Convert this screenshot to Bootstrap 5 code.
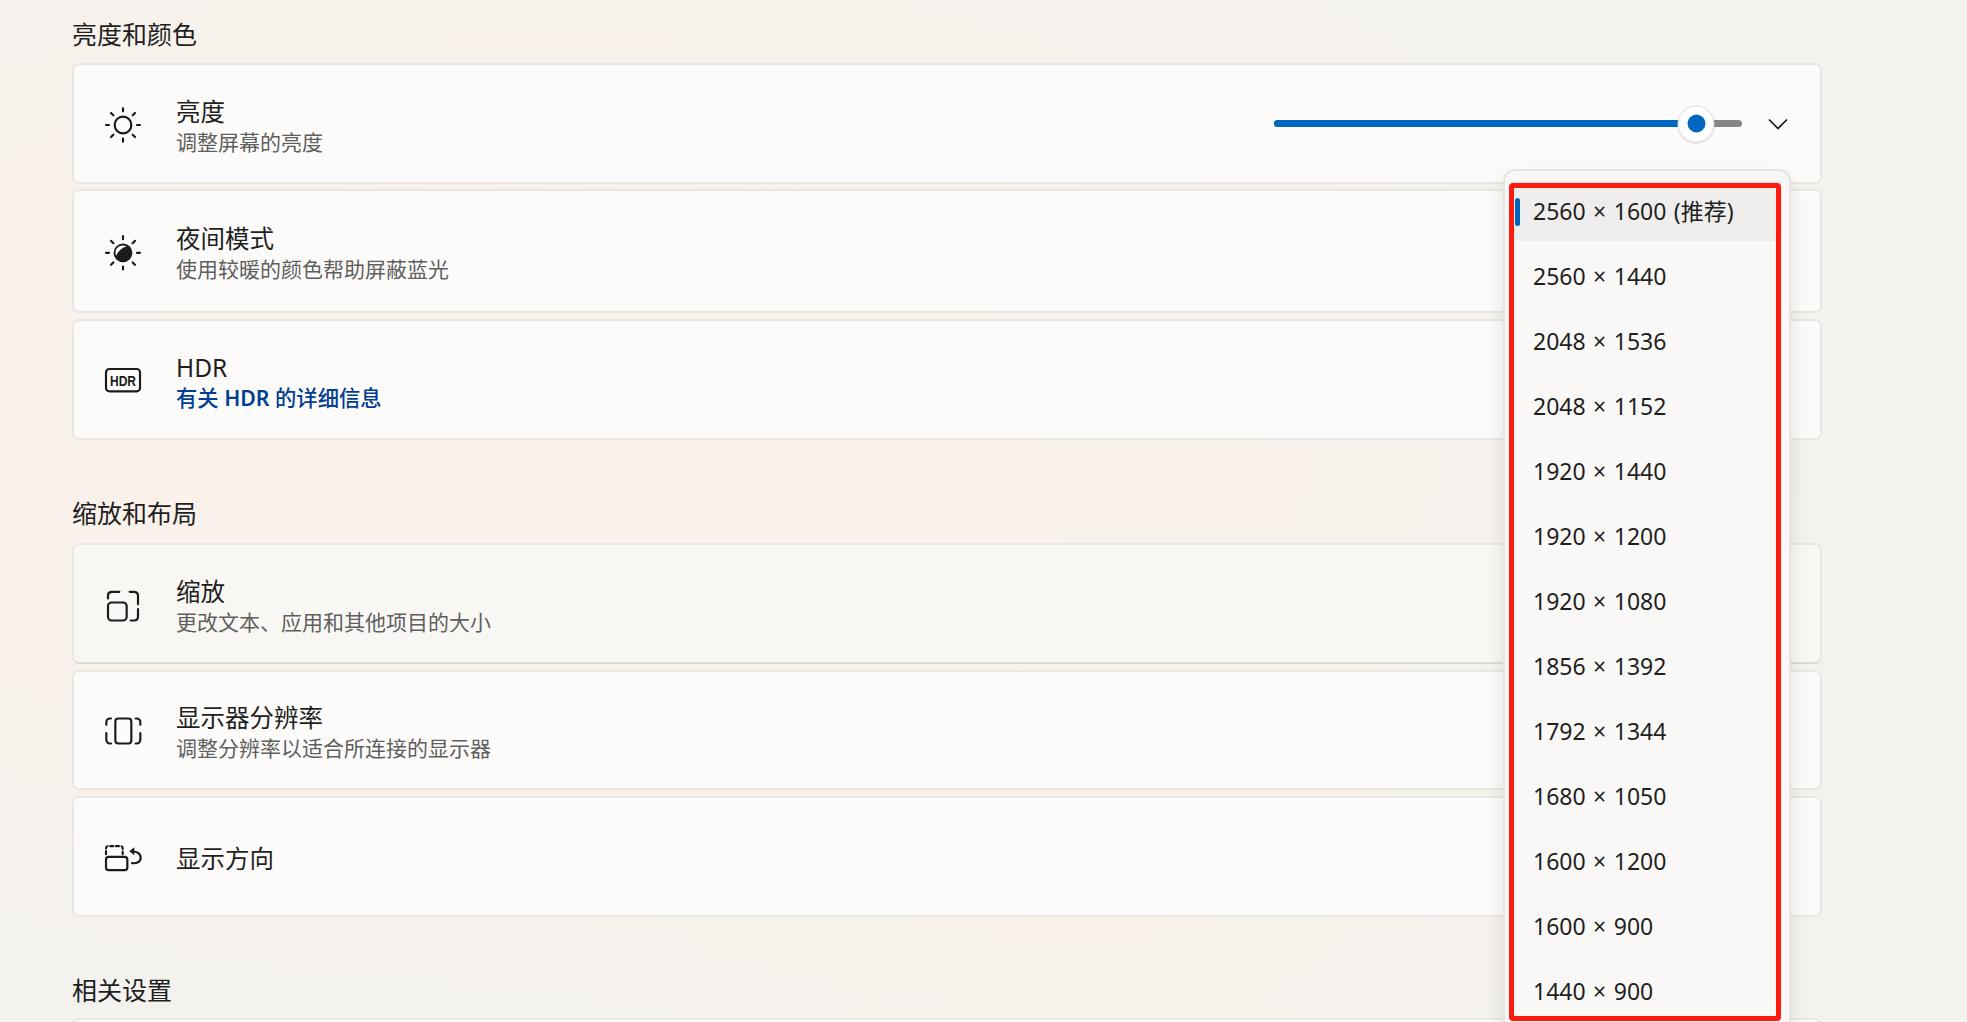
<!DOCTYPE html>
<html lang="zh-CN">
<head>
<meta charset="utf-8">
<title>显示</title>
<link href="https://cdn.jsdelivr.net/npm/bootstrap@5.3.0/dist/css/bootstrap.min.css" rel="stylesheet">
<style>
html,body{height:100%;overflow:hidden}
body{font-family:"Noto Sans","Noto Sans CJK SC",sans-serif;color:#1b1b1b;
  background:
    radial-gradient(ellipse 1250px 640px at 560px 420px,#faf1ea 0%,rgba(250,241,234,.8) 55%,rgba(250,241,234,0) 100%),
    radial-gradient(ellipse 600px 300px at 1100px 900px,#f8f1ea 0%,rgba(248,241,234,0) 100%),
    #f3f2ee}
.canvas{position:relative;width:1967px;height:1022px;padding:0 145px 0 72px}
.group-head{font-size:25px;line-height:34px;font-weight:400;margin:0;color:#1f1f1f}
.head-one{padding-top:17px;margin-bottom:12px}
.head-two{padding-top:51px;margin-bottom:13px}
.head-three{padding-top:51px;margin-bottom:11px}
.setting{height:121px;margin-bottom:5px;background:#fcfbf9;border:2px solid #ebe8e4;border-radius:7px;
  flex-direction:row;align-items:center;padding:0 32px 0 16px}
.setting.tall{height:124px;margin-bottom:6px}
.setting.hovered{background:#f9f7f4;border-bottom-color:#dedbd6;margin-bottom:6px}
.setting.shorter{height:120px;margin-bottom:6px}
.setting.last-one{height:121px}
.setting.stub{height:60px}
.glyph{flex:0 0 70px;width:70px;height:70px;margin-right:16px}
.glyph *{fill:none;stroke:#1b1b1b;stroke-width:6.5;stroke-linecap:round;stroke-linejoin:round}
.glyph .solid{fill:#1b1b1b;stroke:none}
.glyph .hole{fill:#fcfbf9;stroke:none}
.glyph .mark-text{fill:#1b1b1b;stroke:none;font:700 46px "Liberation Sans",sans-serif}
.labels{padding-top:5px}
.labels.solo{padding-top:3px}
.label-main{font-size:24.5px;line-height:31px;color:#1f1f1f}
.label-sub{font-size:21px;line-height:30px;color:#5f5f5f}
.label-link{font-size:21.3px;line-height:30px;color:#003e92;font-weight:500;text-decoration:none}
.label-link b{font-weight:600}
.slider-box{margin-left:auto;display:flex;align-items:center;gap:26px}
.track{position:relative;width:468px;height:7px;border-radius:4px;background:#868686}
.track-fill{height:7px;border-radius:4px;background:#0067c0}
.thumb{position:absolute;top:50%;width:37px;height:37px;border-radius:50%;background:#fff;border:1px solid #e4e3e1;
  box-shadow:0 1px 2px rgba(0,0,0,.14);transform:translate(-50%,-50%);display:flex;align-items:center;justify-content:center}
.thumb-dot{width:18px;height:18px;border-radius:50%;background:#0067c0}
.chev{width:20px;height:12px;fill:none;stroke:#1b1b1b;stroke-width:1.7}
.popup{position:absolute;left:1503px;top:169px;width:288px;height:900px;padding:10px 7px 0 7px;background:#f9f8f6;
  border:2px solid #e7e5e2;border-radius:12px;box-shadow:0 8px 18px rgba(0,0,0,.10)}
.res-item{position:relative;height:58px;margin-bottom:7px;padding:0 0 0 21px;display:flex;align-items:center;
  background:transparent;border:0;border-radius:5px;font-size:23px;word-spacing:1.5px;color:#1f1f1f;white-space:nowrap}
.res-item.current{background:#efeeec;height:60px;margin-bottom:6.5px}
.res-item.current::before{content:"";position:absolute;left:3px;top:17px;width:5px;height:28px;border-radius:3px;background:#0067c0}
.red-frame{position:absolute;left:1509px;top:183px;width:272px;height:838px;border:5px solid #ff1a0e;border-radius:4px;pointer-events:none}
</style>
</head>
<body>
<div class="canvas overflow-hidden">
  <h2 class="group-head head-one">亮度和颜色</h2>

  <div class="card setting">
    <svg class="glyph" viewBox="0 -6 210 210">
      <circle cx="99" cy="102" r="25"/>
      <path d="M99 52v9M99 143v9M48 102h9M141 102h9M63 66l7 7M128 131l7 7M135 66l-7 7M70 131l-7 7"/>
    </svg>
    <div class="labels">
      <div class="label-main">亮度</div>
      <div class="label-sub">调整屏幕的亮度</div>
    </div>
    <div class="slider-box">
      <div class="track">
        <div class="track-fill" style="width:90.2%"></div>
        <div class="thumb" style="left:90.2%"><div class="thumb-dot"></div></div>
      </div>
      <svg class="chev" viewBox="0 0 20 12"><path d="M1 1.5l9 9 9-9"/></svg>
    </div>
  </div>

  <div class="card setting tall">
    <svg class="glyph" viewBox="0 -13.5 210 210">
      <circle class="solid" cx="99" cy="97" r="28"/>
      <path class="hole" d="M78 106C72 84 88 70 110 77 94 82 84 92 78 106z"/>
      <path d="M99 47v9M99 138v9M48 97h9M141 97h9M63 61l7 7M128 126l7 7M135 61l-7 7M70 126l-7 7"/>
    </svg>
    <div class="labels">
      <div class="label-main">夜间模式</div>
      <div class="label-sub">使用较暖的颜色帮助屏蔽蓝光</div>
    </div>
  </div>

  <div class="card setting">
    <svg class="glyph" viewBox="0 -3 210 210">
      <rect x="48" y="69" width="102" height="67" rx="10"/>
      <text class="mark-text" x="60" y="119" textLength="78" lengthAdjust="spacingAndGlyphs">HDR</text>
    </svg>
    <div class="labels">
      <div class="label-main">HDR</div>
      <a class="label-link" href="#">有关 <b>HDR</b> 的详细信息</a>
    </div>
  </div>

  <h2 class="group-head head-two">缩放和布局</h2>

  <div class="card setting hovered">
    <svg class="glyph" viewBox="0 -10.5 210 210">
      <rect x="54" y="90" width="56" height="54" rx="11"/>
      <path d="M54 78v-8c0-7 5-12 12-12h22M119 58h12c8 0 13 5 13 12v25M144 110v22c0 7-5 12-12 12h-10"/>
    </svg>
    <div class="labels">
      <div class="label-main">缩放</div>
      <div class="label-sub">更改文本、应用和其他项目的大小</div>
    </div>
  </div>

  <div class="card setting shorter">
    <svg class="glyph" viewBox="0 -4.5 210 210">
      <rect x="76" y="66" width="48" height="75" rx="9"/>
      <path d="M63 66h-3c-6 0-11 5-11 11v8M49 110v20c0 6 5 11 11 11h3M137 66h3c6 0 11 5 11 11v8M151 110v20c0 6-5 11-11 11h-3"/>
    </svg>
    <div class="labels">
      <div class="label-main">显示器分辨率</div>
      <div class="label-sub">调整分辨率以适合所连接的显示器</div>
    </div>
  </div>

  <div class="card setting last-one">
    <svg class="glyph" viewBox="0 -4.5 210 210">
      <rect x="48" y="100" width="64" height="40" rx="8"/>
      <path stroke-dasharray="9 8" d="M48 92v-18c0-3 2-6 6-6h38c4 0 6 3 6 6v18"/>
      <path d="M126 84c14-1 26 6 26 19s-12 17-26 16"/>
      <path class="solid" d="M118 83l15-12v24z"/>
    </svg>
    <div class="labels solo">
      <div class="label-main">显示方向</div>
    </div>
  </div>

  <h2 class="group-head head-three">相关设置</h2>
  <div class="card setting stub"></div>

  <div class="popup">
    <div class="list-group list-group-flush">
      <div class="list-group-item res-item current">2560 × 1600 (推荐)</div>
      <div class="list-group-item res-item">2560 × 1440</div>
      <div class="list-group-item res-item">2048 × 1536</div>
      <div class="list-group-item res-item">2048 × 1152</div>
      <div class="list-group-item res-item">1920 × 1440</div>
      <div class="list-group-item res-item">1920 × 1200</div>
      <div class="list-group-item res-item">1920 × 1080</div>
      <div class="list-group-item res-item">1856 × 1392</div>
      <div class="list-group-item res-item">1792 × 1344</div>
      <div class="list-group-item res-item">1680 × 1050</div>
      <div class="list-group-item res-item">1600 × 1200</div>
      <div class="list-group-item res-item">1600 × 900</div>
      <div class="list-group-item res-item">1440 × 900</div>
    </div>
  </div>
  <div class="red-frame"></div>
</div>
<script src="https://cdn.jsdelivr.net/npm/bootstrap@5.3.0/dist/js/bootstrap.bundle.min.js"></script>
</body>
</html>
